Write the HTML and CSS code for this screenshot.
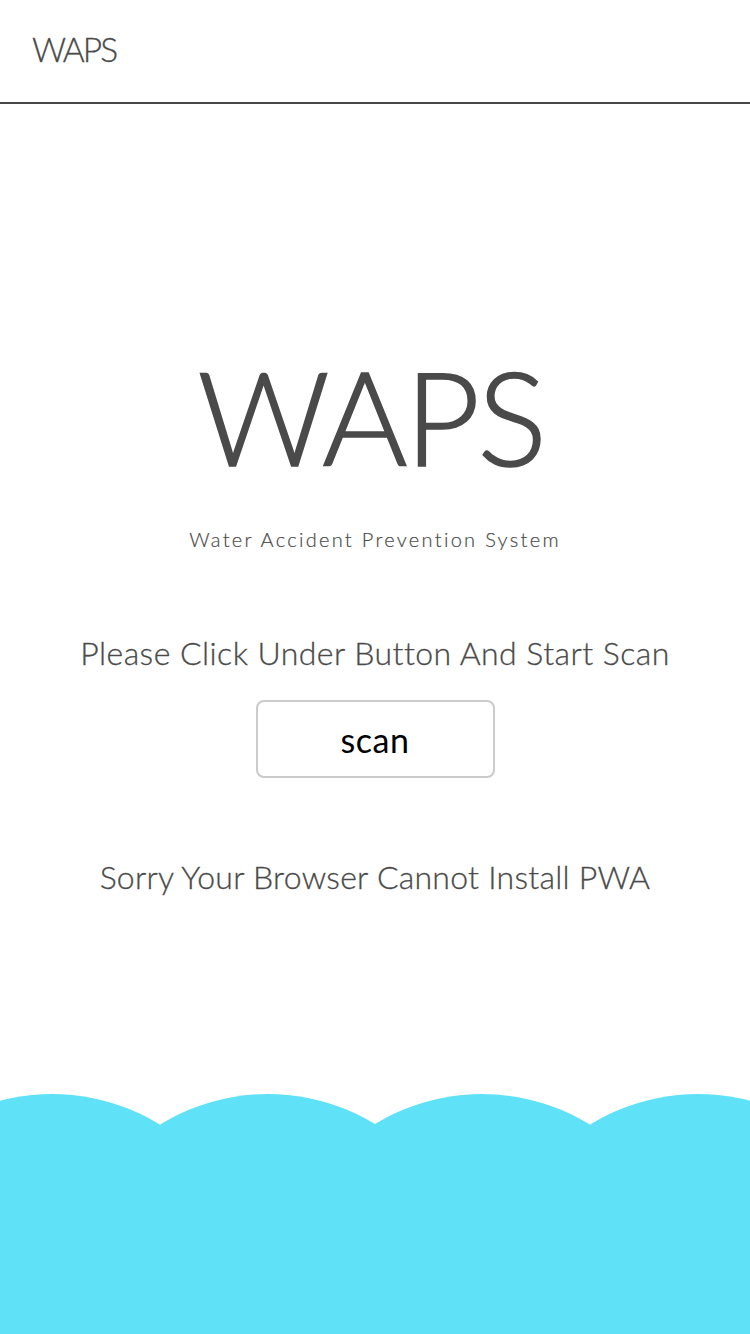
FILE: index.html
```html
<!DOCTYPE html>
<html lang="en">
<head>
<meta charset="utf-8">
<title>WAPS</title>
<link rel="stylesheet" href="styles.css">
</head>
<body>
<div class="page">
  <header class="topbar">
    <span class="topbar-title">WAPS</span>
  </header>
  <main class="hero">
    <h1 class="hero-title">WAPS</h1>
    <p class="hero-sub">Water Accident Prevention System</p>
    <p class="hero-hint">Please Click Under Button And Start Scan</p>
    <button class="scan-btn" type="button">scan</button>
    <p class="hero-note">Sorry Your Browser Cannot Install PWA</p>
  </main>
  <footer class="waves">
    <svg class="waves-svg" viewBox="0 0 750 240" width="750" height="240" aria-hidden="true">
      <circle cx="52" cy="205" r="205" fill="#5fe1f8"/>
      <circle cx="268" cy="205" r="205" fill="#5fe1f8"/>
      <circle cx="482" cy="205" r="205" fill="#5fe1f8"/>
      <circle cx="698" cy="205" r="205" fill="#5fe1f8"/>
      <rect x="0" y="100" width="750" height="140" fill="#5fe1f8"/>
    </svg>
  </footer>
</div>
</body>
</html>
```
FILE: styles.css
```css
* { box-sizing: border-box; }
html, body { margin: 0; padding: 0; background: #ffffff; }
body {
  font-family: "Lato", "Noto Sans", "Liberation Sans", sans-serif;
  color: #4a4a4a;
  font-weight: 300;
}
.page {
  width: 750px;
  height: 1334px;
  display: flex;
  flex-direction: column;
  overflow: hidden;
}
.topbar {
  height: 104px;
  padding: 29px 0 0 32px;
  border-bottom: 2px solid #474747;
}
.topbar-title {
  display: block;
  font-size: 33.5px;
  line-height: 40px;
  letter-spacing: -2px;
  -webkit-text-stroke: 0.3px #4a4a4a;
}
.hero {
  display: flex;
  flex-direction: column;
  align-items: center;
  text-align: center;
}
.hero-title {
  margin: 247px 0 0;
  padding-right: 8px;
  font-size: 130px;
  line-height: 130px;
  font-weight: 300;
  letter-spacing: -2.5px;
  -webkit-text-stroke: 1.6px #4a4a4a;
}
.hero-sub {
  margin: 46px 0 0;
  font-size: 20px;
  line-height: 24px;
  letter-spacing: 2.3px;
  -webkit-text-stroke: 0.2px #4a4a4a;
}
.hero-hint {
  margin: 83px 0 0;
  font-size: 32px;
  line-height: 38px;
  letter-spacing: 0.45px;
  -webkit-text-stroke: 0.3px #4a4a4a;
}
.scan-btn {
  margin-top: 28px;
  width: 239px;
  height: 78px;
  background: #ffffff;
  border: 2px solid #cbcbcb;
  border-radius: 8px;
  font-family: inherit;
  font-weight: 400;
  font-size: 34px;
  letter-spacing: 0.5px;
  color: #000000;
  padding: 0;
}
.hero-note {
  margin: 80px 0 0;
  font-size: 32px;
  line-height: 38px;
  letter-spacing: 0.25px;
  -webkit-text-stroke: 0.3px #4a4a4a;
}
.waves {
  margin-top: auto;
  height: 240px;
}
.waves-svg { display: block; }
```
